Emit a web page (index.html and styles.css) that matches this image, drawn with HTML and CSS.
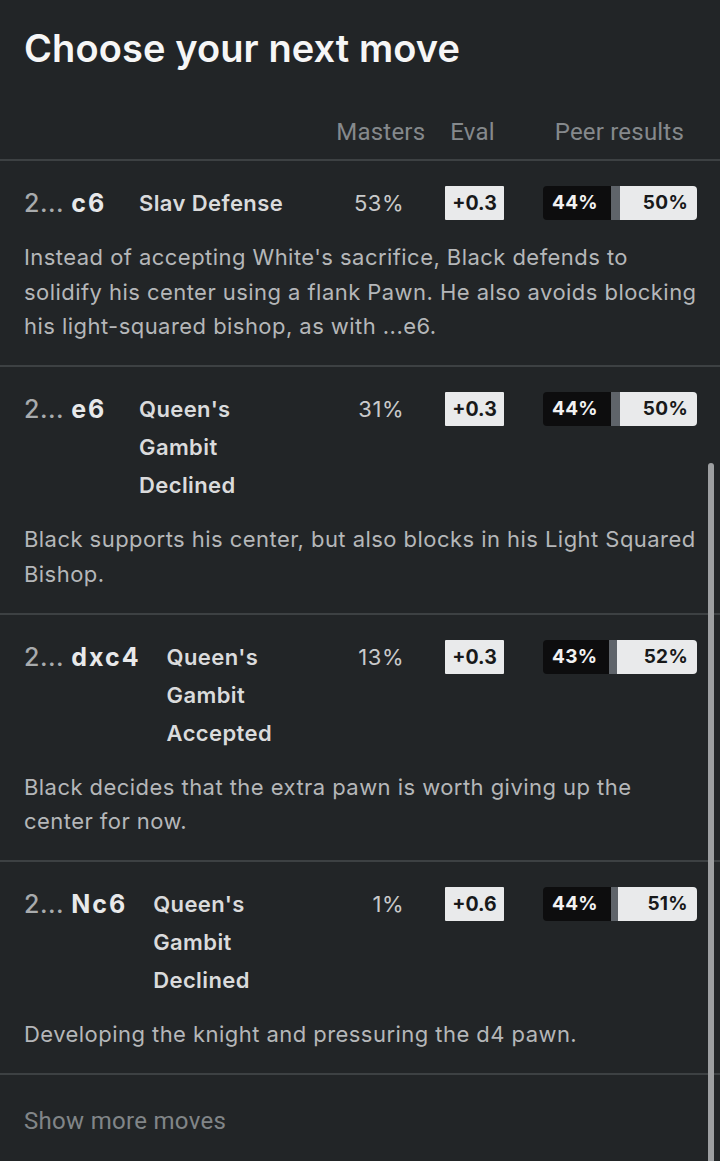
FILE: index.html
```html
<!DOCTYPE html>
<html lang="en">
<head>
<meta charset="utf-8">
<title>Choose your next move</title>
<link rel="stylesheet" href="styles.css">
</head>
<body>
<div class="panel">
  <h1 class="title">Choose your next move</h1>
  <div class="cols">
    <span class="col-masters">Masters</span>
    <span class="col-eval">Eval</span>
    <span class="col-peer">Peer results</span>
  </div>

  <div class="move-row">
    <div class="head">
      <div class="move"><span class="num">2...</span> <span class="san">c6</span></div>
      <div class="name">Slav Defense</div>
      <div class="masters">53%</div>
      <div class="eval">+0.3</div>
      <div class="peer">
        <div class="seg dark" style="width:44%">44%</div>
        <div class="seg draw" style="width:6%"></div>
        <div class="seg light" style="width:50%">50%</div>
      </div>
    </div>
    <p class="desc">Instead of accepting White's sacrifice, Black defends to solidify his center using a flank Pawn. He also avoids blocking his light-squared bishop, as with ...e6.</p>
  </div>

  <div class="move-row">
    <div class="head">
      <div class="move"><span class="num">2...</span> <span class="san">e6</span></div>
      <div class="name">Queen's Gambit Declined</div>
      <div class="masters">31%</div>
      <div class="eval">+0.3</div>
      <div class="peer">
        <div class="seg dark" style="width:44%">44%</div>
        <div class="seg draw" style="width:6%"></div>
        <div class="seg light" style="width:50%">50%</div>
      </div>
    </div>
    <p class="desc">Black supports his center, but also blocks in his Light Squared Bishop.</p>
  </div>

  <div class="move-row">
    <div class="head">
      <div class="move"><span class="num">2...</span> <span class="san">dxc4</span></div>
      <div class="name">Queen's Gambit Accepted</div>
      <div class="masters">13%</div>
      <div class="eval">+0.3</div>
      <div class="peer">
        <div class="seg dark" style="width:43%">43%</div>
        <div class="seg draw" style="width:5%"></div>
        <div class="seg light" style="width:52%">52%</div>
      </div>
    </div>
    <p class="desc">Black decides that the extra pawn is worth giving up the center for now.</p>
  </div>

  <div class="move-row">
    <div class="head">
      <div class="move"><span class="num">2...</span> <span class="san">Nc6</span></div>
      <div class="name">Queen's Gambit Declined</div>
      <div class="masters">1%</div>
      <div class="eval">+0.6</div>
      <div class="peer">
        <div class="seg dark" style="width:44%">44%</div>
        <div class="seg draw" style="width:5%"></div>
        <div class="seg light" style="width:51%">51%</div>
      </div>
    </div>
    <p class="desc">Developing the knight and pressuring the d4 pawn.</p>
  </div>

  <div class="more">Show more moves</div>
  <div class="scrollbar"></div>
</div>
</body>
</html>
```

FILE: styles.css
```css
html, body {
  margin: 0;
  padding: 0;
  background: #222527;
}
body {
  font-family: Inter, "Noto Sans", sans-serif;
  color: #e4e5e6;
}
.panel {
  position: relative;
  height: 1161px;
  overflow: hidden;
}
.title {
  margin: 24px 24px 0;
  font-size: 38px;
  line-height: 48px;
  font-weight: 600;
  color: #f6f6f6;
  letter-spacing: 0.1px;
}
.cols {
  display: flex;
  margin-top: 46px;
  padding: 0 36px 13px 0;
  justify-content: flex-end;
  font-family: Roboto, "Liberation Sans", sans-serif;
  font-size: 24px;
  letter-spacing: 0.2px;
  line-height: 28px;
  color: #85898c;
}
.col-eval { margin-left: 25px; }
.col-peer { margin-left: 60px; }
.move-row {
  border-top: 2px solid #3d4143;
  padding: 23px 23px 21.5px 24px;
}
.head {
  display: flex;
  align-items: flex-start;
  line-height: 38px;
}
.move {
  min-width: 89px;
  margin-right: 26px;
  font-size: 25px;
  white-space: nowrap;
}
.num { color: #a8abad; font-weight: 500; letter-spacing: 0.5px; }
.san { color: #e8e9ea; font-weight: 700; letter-spacing: 2px; }
.name {
  flex: 1;
  font-size: 22px;
  font-weight: 600;
  letter-spacing: 0.4px;
  color: #dadbdc;
}
.masters {
  width: 114px;
  text-align: right;
  font-size: 22px;
  letter-spacing: 0.5px;
  color: #c9cacb;
}
.eval {
  width: 59px;
  height: 34px;
  margin: 2px 0 0 41px;
  background: #e9eaeb;
  border-radius: 1px;
  color: #18191a;
  font-size: 19.5px;
  font-weight: 700;
  line-height: 34px;
  text-align: center;
}
.peer {
  display: flex;
  width: 154px;
  height: 34px;
  margin: 2px 0 0 39px;
  border-radius: 4px;
  overflow: hidden;
  font-size: 19px;
  font-weight: 700;
  letter-spacing: 0.3px;
  line-height: 34px;
}
.seg { height: 100%; }
.dark {
  background: #0d0d0e;
  color: #f2f2f2;
  padding-left: 9px;
  box-sizing: border-box;
}
.draw { background: #5f646a; }
.light {
  background: #e9eaeb;
  color: #18191a;
  text-align: right;
  padding-right: 9px;
  box-sizing: border-box;
}
.desc {
  margin: 18px 0 0;
  font-size: 22px;
  letter-spacing: 0.45px;
  line-height: 34.5px;
  color: #b5b7b9;
}
.more {
  border-top: 2px solid #3d4143;
  padding: 32px 24px 30px;
  font-family: Roboto, "Liberation Sans", sans-serif;
  font-size: 24px;
  letter-spacing: 0.3px;
  line-height: 28px;
  color: #818588;
}
.scrollbar {
  position: absolute;
  left: 708px;
  top: 463px;
  width: 6px;
  height: 720px;
  border-radius: 3px;
  background: #9d9fa1;
}
```
